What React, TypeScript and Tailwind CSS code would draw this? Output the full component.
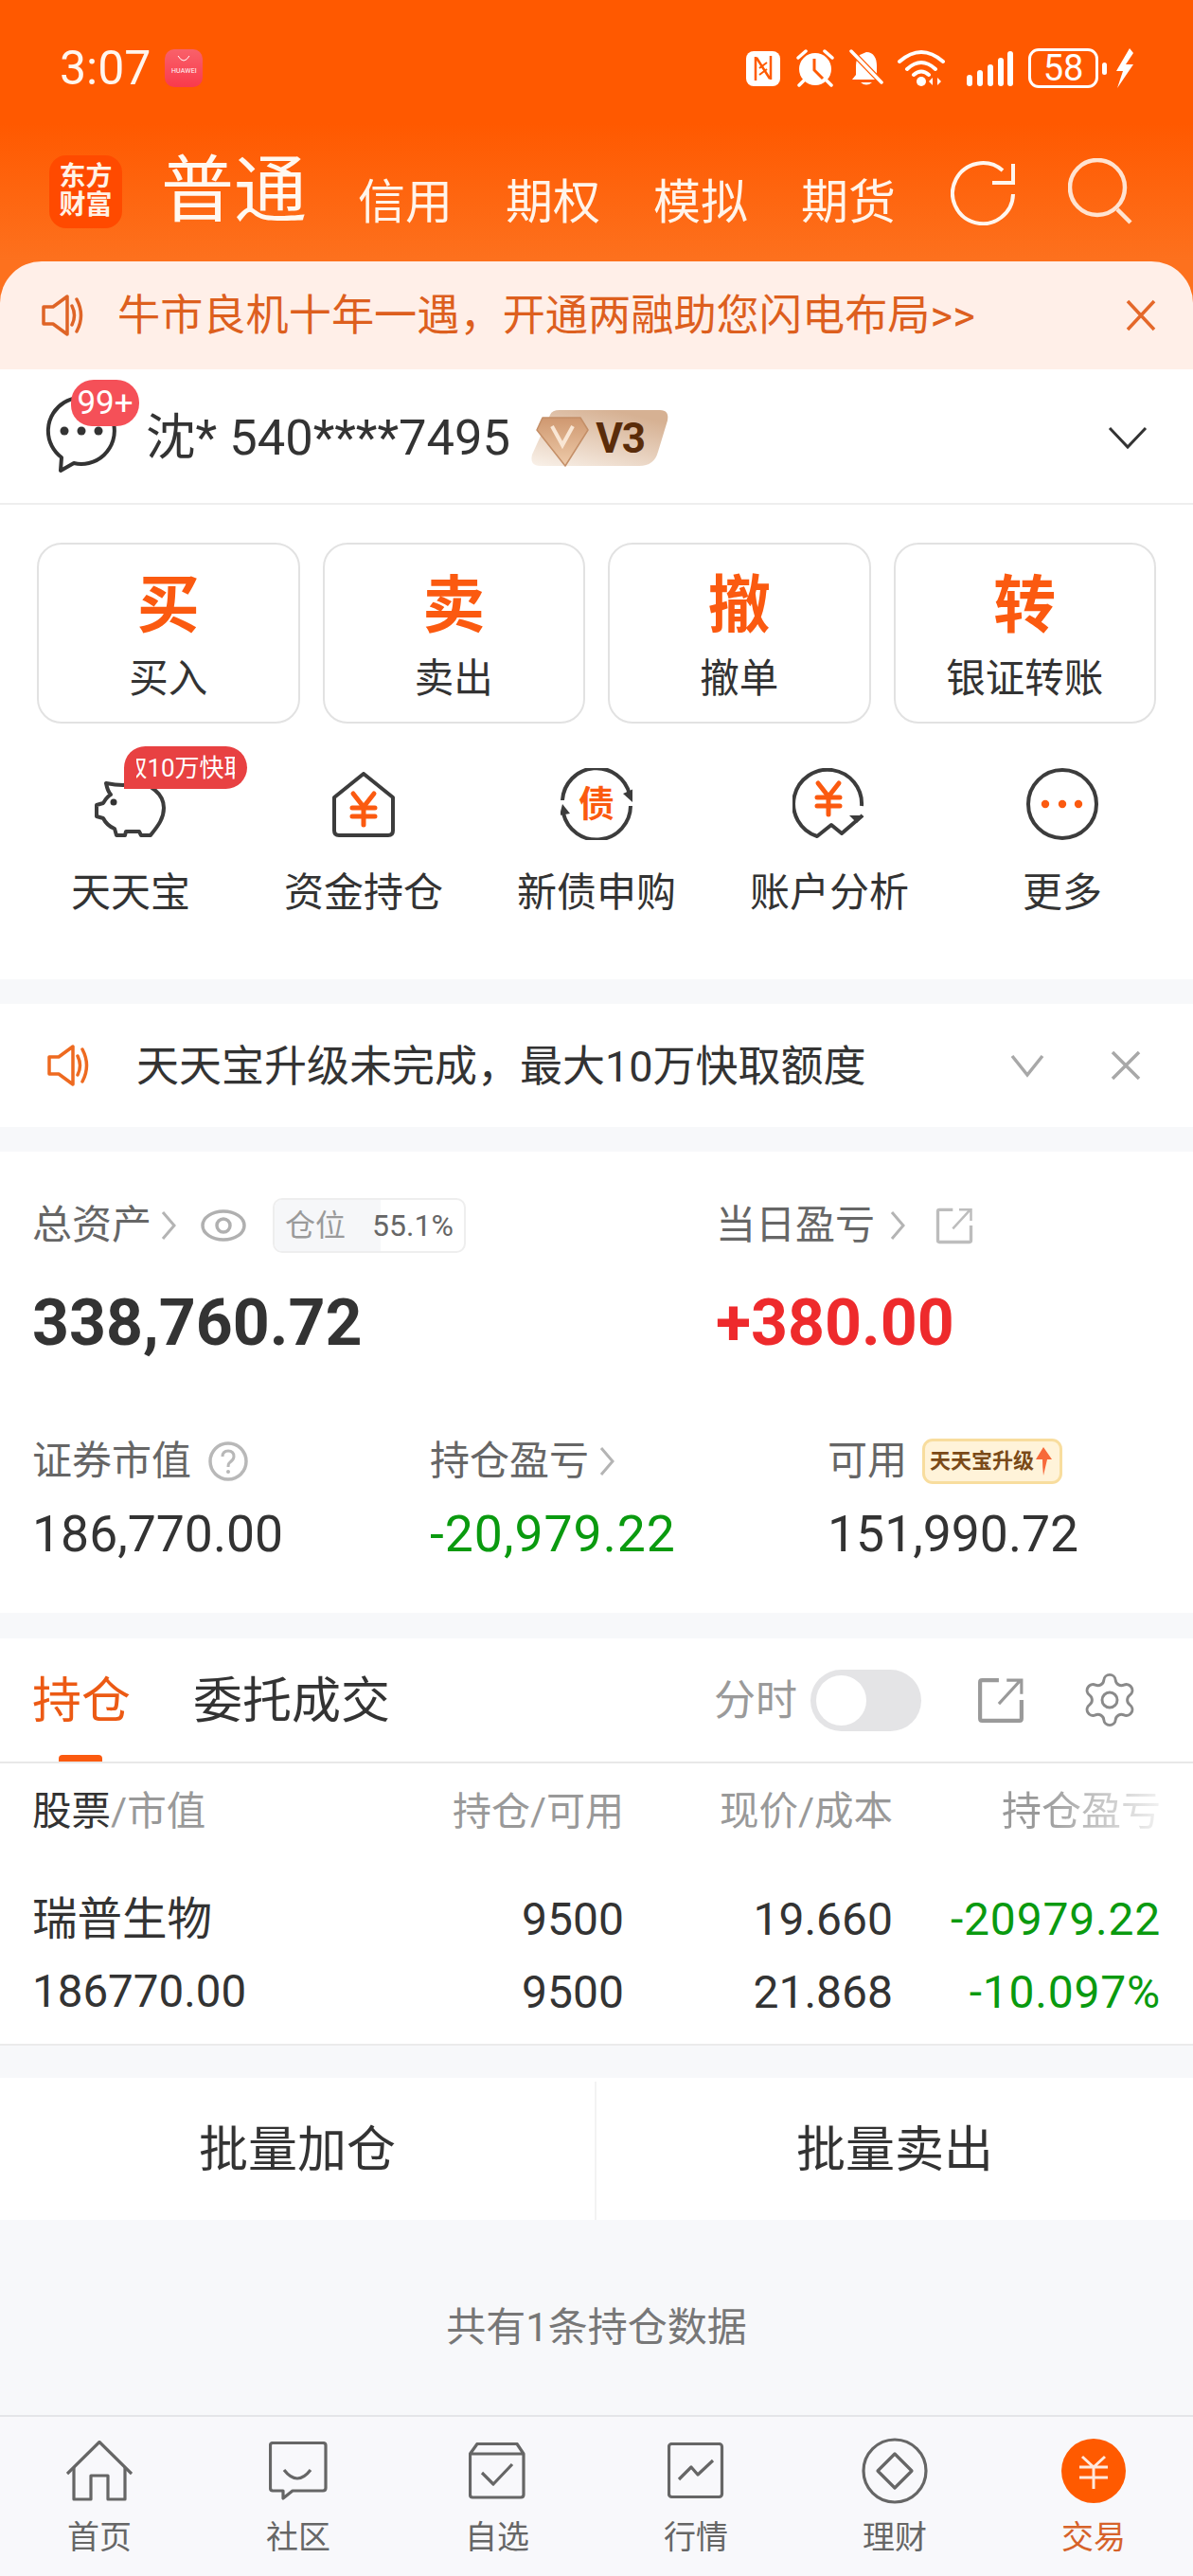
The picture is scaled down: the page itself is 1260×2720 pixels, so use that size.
import React from "react";
import { Settings } from "lucide-react";

const FONT = "font-['Roboto','Noto_Sans_CJK_SC',sans-serif]";

function Huawei() {
  return (
    <div className="ml-[15px] flex h-[40px] w-[40px] flex-col items-center rounded-[10px] bg-[linear-gradient(180deg,#f9616a,#f93a4c)]">
      <svg width="16" height="10" viewBox="0 0 16 10" className="mt-[6px]">
        <path d="M2 1 Q8 11 14 1" fill="none" stroke="#fff" strokeWidth="1" />
      </svg>
      <span className="mt-[3px] text-[7px] leading-[9px] tracking-[0.2px] text-white">HUAWEI</span>
    </div>
  );
}

function StatusIcons() {
  return (
    <div className="absolute left-[788px] top-[51px] flex items-center">
      <svg width="36" height="38" viewBox="0 0 36 38">
        <rect x="0" y="1" width="36" height="37" rx="8" fill="#fff" />
        <path d="M10 7 L10 32 M26 6 L26 31 M11 8 L25 30" stroke="#ff5a00" strokeWidth="2.5" fill="none" />
        <path d="M14 19 L22 13 M14 26 L22 20" stroke="#ff5a00" strokeWidth="2" fill="none" />
      </svg>
      <svg width="42" height="40" viewBox="0 0 42 40" className="ml-[16px]">
        <circle cx="21" cy="21" r="17" fill="#fff" />
        <path d="M3 9 L11 2 M39 9 L31 2 M9 33 L4 38 M33 33 L38 38" stroke="#fff" strokeWidth="3.5" strokeLinecap="round" />
        <path d="M20 10 V22 L29 31" stroke="#ff5a00" strokeWidth="3" fill="none" />
      </svg>
      <svg width="36" height="40" viewBox="0 0 36 40" className="ml-[15px]">
        <path d="M18 3 C26 3 29 10 29 17 V26 L34 32 H3 L7 27 V17 C7 12 9 8 11 6 Z" fill="#fff" />
        <path d="M12 35 Q18 40 24 35 Z" fill="#fff" />
        <path d="M2 2 L34 35" stroke="#ff5a00" strokeWidth="6" />
        <path d="M2 2 L34 35" stroke="#fff" strokeWidth="3.5" strokeLinecap="round" />
      </svg>
      <svg width="50" height="40" viewBox="0 0 50 40" className="ml-[15px]">
        <path d="M2 13 Q25 -7 48 13 M10 21 Q25 7 40 21 M17 27 Q25 20 33 27" fill="none" stroke="#fff" strokeWidth="4" strokeLinecap="round" />
        <circle cx="25" cy="34" r="5" fill="#fff" />
        <path d="M37 30 V38 L33 34 Z M42 30 V38 L46 34 Z" fill="#fff" />
      </svg>
      <svg width="49" height="40" viewBox="0 0 49 40" className="ml-[23px]">
        <rect x="0" y="27" width="6" height="12" rx="3" fill="#fff" />
        <rect x="11" y="22" width="6" height="17" rx="3" fill="#fff" />
        <rect x="22" y="16" width="6" height="23" rx="3" fill="#fff" />
        <rect x="33" y="9" width="6" height="30" rx="3" fill="#fff" />
        <rect x="43" y="2" width="6" height="37" rx="3" fill="#fff" />
      </svg>
      <div className="ml-[16px] flex h-[42px] w-[74px] items-center justify-center rounded-[11px] border-[3px] border-white text-[38px] font-normal leading-[36px] text-white">
        58
      </div>
      <div className="ml-[4px] h-[13px] w-[5px] rounded-full bg-white" />
      <svg width="20" height="42" viewBox="0 0 20 42" className="ml-[9px]">
        <path d="M15 0 L1 24 H8 L2 42 L19 17 H11 L19 5 Z" fill="#fff" />
      </svg>
    </div>
  );
}

function TopTab({ children }: { children: React.ReactNode }) {
  return <span className="text-[50px] leading-[56px] text-[#fff4ea]">{children}</span>;
}

function Speaker({ color, className }: { color: string; className?: string }) {
  return (
    <svg width="46" height="46" viewBox="0 0 46 46" className={className}>
      <path d="M2 14 H12 L27 3 V43 L12 32 H2 Z" fill="none" stroke={color} strokeWidth="3.5" strokeLinejoin="round" />
      <path d="M32 13 Q37 23 32 33 M37 6 Q46 23 37 40" fill="none" stroke={color} strokeWidth="3.5" strokeLinecap="round" />
    </svg>
  );
}

function Header() {
  return (
    <div className="relative h-[390px] bg-[linear-gradient(180deg,#ff5900_0,#ff5900_130px,#fd711e_276px)]">
      <div className="flex h-[144px] items-center pl-[63px]">
        <span className="text-[50px] font-normal leading-[50px] text-[#fff6ee]">3:07</span>
        <Huawei />
      </div>
      <StatusIcons />
      <div className="flex h-[116px] items-center pl-[52px]">
        <div className="flex h-[77px] w-[77px] flex-col items-center justify-center rounded-[18px] bg-[#ff4a00] text-[28px] font-bold leading-[30px] text-[#fff2e6]">
          <span>东方</span>
          <span>财富</span>
        </div>
        <span className="ml-[41px] text-[77px] leading-[80px] text-[#fff8f0]">普通</span>
        <div className="ml-[54px] mt-[24px] flex gap-[56px]">
          <TopTab>信用</TopTab>
          <TopTab>期权</TopTab>
          <TopTab>模拟</TopTab>
          <TopTab>期货</TopTab>
        </div>
        <svg width="68" height="68" viewBox="0 0 68 68" className="ml-[58px] mt-[4px]">
          <path d="M66 35 A32 32 0 1 1 55 10" fill="none" stroke="#fff6ee" strokeWidth="4" />
          <path d="M66 3 V23 H44" fill="none" stroke="#fff6ee" strokeWidth="4" />
        </svg>
        <svg width="68" height="70" viewBox="0 0 68 70" className="ml-[56px]">
          <circle cx="31" cy="31" r="29" fill="none" stroke="#ffe3d0" strokeWidth="4.5" />
          <path d="M52 54 L66 68" stroke="#ffe3d0" strokeWidth="4.5" />
        </svg>
      </div>
      <div className="mt-[16px] flex h-[114px] items-center rounded-t-[44px] bg-[#ffefe8] pl-[44px]">
        <Speaker color="#df6426" />
        <span className="ml-[34px] mt-[2px] whitespace-nowrap text-[45.2px] leading-[56px] text-[#dd5f1e]">
          牛市良机十年一遇，开通两融助您闪电布局&gt;&gt;
        </span>
        <svg width="32" height="34" viewBox="0 0 32 34" className="ml-auto mr-[39px]">
          <path d="M2 2 L30 32 M30 2 L2 32" stroke="#e4682a" strokeWidth="3.5" />
        </svg>
      </div>
    </div>
  );
}

function UserRow() {
  return (
    <div className="relative flex h-[143px] items-center border-b-2 border-[#eeeeee] bg-white pl-[48px]">
      <svg width="76" height="82" viewBox="0 0 76 82" className="-mt-[6px]">
        <path d="M30 72 A35 35 0 1 0 17 66 L16 80 Z" fill="none" stroke="#333" strokeWidth="4" strokeLinejoin="round" />
        <circle cx="20" cy="38" r="4.5" fill="#333" />
        <circle cx="38" cy="38" r="4.5" fill="#333" />
        <circle cx="56" cy="38" r="4.5" fill="#333" />
      </svg>
      <div className="absolute left-[75px] top-[11px] flex h-[49px] w-[72px] items-center justify-center rounded-[24px] rounded-bl-[22px] bg-[#f55058] text-[35px] leading-[40px] text-white">
        99+
      </div>
      <span className="ml-[30px] mt-[2px] whitespace-nowrap text-[52.5px] leading-[60px] text-[#333]">沈* 540****7495</span>
      <div className="relative ml-[20px] mt-[4px] h-[61px] w-[148px]">
        <svg width="148" height="61" viewBox="0 0 148 61">
          <defs>
            <linearGradient id="tagFill" x1="0" y1="1" x2="0.6" y2="0">
              <stop offset="0" stopColor="#f9f1e9" />
              <stop offset="1" stopColor="#d6b193" />
            </linearGradient>
            <linearGradient id="gemFill" x1="0" y1="0" x2="0" y2="1">
              <stop offset="0" stopColor="#cf9870" />
              <stop offset="1" stopColor="#eecbaa" />
            </linearGradient>
          </defs>
          <path d="M22 6 Q24 1 32 1 H138 Q148 1 146 12 L136 45 Q132 60 116 60 H12 Q0 60 3 48 Z" fill="url(#tagFill)" />
          <path d="M14 9 L54 9 L62 22 L38 60 L8 22 Z" fill="url(#gemFill)" stroke="#c48f68" strokeWidth="1.5" strokeLinejoin="round" />
          <path d="M24 18 L35 38 L46 18" fill="none" stroke="#f9e6d4" strokeWidth="4" />
        </svg>
        <span className="absolute left-[70px] top-[6px] text-[44px] font-bold leading-[50px] tracking-[-1px] text-[#5a2c0a]">V3</span>
      </div>
      <svg width="42" height="26" viewBox="0 0 42 26" className="ml-auto mr-[48px] mt-[2px]">
        <path d="M2 3 L21 23 L40 3" fill="none" stroke="#333" strokeWidth="3" />
      </svg>
    </div>
  );
}

function ActionCard({ big, label }: { big: string; label: string }) {
  return (
    <div className="flex h-[191px] flex-col items-center rounded-[26px] border-2 border-[#e2e2e2]">
      <span className="mt-[29px] text-[66px] font-bold leading-[72px] text-[#fb5a10]">{big}</span>
      <span className="mt-[18px] whitespace-nowrap text-[41.5px] leading-[46px] text-[#333]">{label}</span>
    </div>
  );
}

const orangeYuan = (cx: number, top: number) => (
  <path
    d={`M${cx - 11} ${top} L${cx} ${top + 14} L${cx + 11} ${top} M${cx} ${top + 14} V${top + 33} M${cx - 12} ${top + 15} H${cx + 12} M${cx - 12} ${top + 24} H${cx + 12}`}
    fill="none"
    stroke="#fb5a10"
    strokeWidth="5"
    strokeLinecap="round"
  />
);

function PigIcon() {
  return (
    <svg width="76" height="62" viewBox="0 0 76 62" className="mt-[12px]">
      <path
        d="M30 6 C24 6 22 6 12 4 C13 9 14 13 17 16 C13 18 11 22 9 25 L2 27 L2 39 L9 41 C12 47 16 50 21 52 L23 59 L32 59 L33 55 L47 55 L49 59 L59 59 C66 50 73 42 73 30 C73 15 58 4 44 4 Z"
        fill="none"
        stroke="#3c3c3c"
        strokeWidth="4"
        strokeLinejoin="round"
      />
      <circle cx="20" cy="24" r="3.5" fill="#333" />
    </svg>
  );
}

function HouseIcon() {
  return (
    <svg width="66" height="70" viewBox="0 0 66 70" className="mt-[4px]">
      <path d="M33 2 L64 27 V62 Q64 67 59 67 H7 Q2 67 2 62 V27 Z" fill="none" stroke="#3c3c3c" strokeWidth="4" strokeLinejoin="round" />
      {orangeYuan(33, 23)}
    </svg>
  );
}

function BondIcon() {
  return (
    <div className="relative h-[76px] w-[76px]">
      <svg width="76" height="76" viewBox="0 0 76 76">
        <path d="M2 34 A36 36 0 0 1 73 28" fill="none" stroke="#3c3c3c" strokeWidth="4" />
        <path d="M66 27 L76 36 L77 22 Z" fill="#3c3c3c" />
        <path d="M74 40 A36 36 0 0 1 3 48" fill="none" stroke="#3c3c3c" strokeWidth="4" />
        <path d="M-1 50 L10 48 L2 38 Z" fill="#3c3c3c" />
      </svg>
      <span className="absolute left-0 top-[16px] w-full text-center text-[38px] font-bold leading-[44px] text-[#fb5a10]">债</span>
    </div>
  );
}

function AnalysisIcon() {
  return (
    <svg width="78" height="76" viewBox="0 0 78 76">
      <path d="M73 40 A36 36 0 1 0 26 72 L41 60 L52 69 L74 50" fill="none" stroke="#3c3c3c" strokeWidth="4" strokeLinejoin="round" />
      <path d="M60 50 H75 L68 58 Z" fill="#3c3c3c" />
      {orangeYuan(38, 16)}
    </svg>
  );
}

function MoreIcon() {
  return (
    <svg width="76" height="76" viewBox="0 0 76 76">
      <circle cx="38" cy="38" r="36" fill="none" stroke="#3c3c3c" strokeWidth="4" />
      <circle cx="20" cy="38" r="4.2" fill="#fb5a10" />
      <circle cx="38" cy="38" r="4.2" fill="#fb5a10" />
      <circle cx="55" cy="38" r="4.2" fill="#fb5a10" />
    </svg>
  );
}

function Shortcut({ icon, label, children }: { icon: React.ReactNode; label: string; children?: React.ReactNode }) {
  return (
    <div className="relative flex flex-col items-center">
      <div className="flex h-[76px] items-start justify-center">{icon}</div>
      <span className="mt-[31px] whitespace-nowrap text-[42px] leading-[50px] text-[#333]">{label}</span>
      {children}
    </div>
  );
}

function Actions() {
  return (
    <div className="h-[501px] bg-white pt-[40px]">
      <div className="grid grid-cols-4 gap-[24px] px-[39px]">
        <ActionCard big="买" label="买入" />
        <ActionCard big="卖" label="卖出" />
        <ActionCard big="撤" label="撤单" />
        <ActionCard big="转" label="银证转账" />
      </div>
      <div className="mt-[47px] grid grid-cols-5 px-[15px]">
        <Shortcut icon={<PigIcon />} label="天天宝">
          <div className="absolute left-[116px] top-[-23px] flex h-[45px] w-[130px] items-center justify-center rounded-[23px] rounded-bl-none bg-[#e84142]">
            <div className="flex w-[104px] justify-center overflow-hidden">
              <span className="whitespace-nowrap text-[26px] leading-[36px] text-white">取10万快取</span>
            </div>
          </div>
        </Shortcut>
        <Shortcut icon={<HouseIcon />} label="资金持仓" />
        <Shortcut icon={<BondIcon />} label="新债申购" />
        <Shortcut icon={<AnalysisIcon />} label="账户分析" />
        <Shortcut icon={<MoreIcon />} label="更多" />
      </div>
    </div>
  );
}

function Notice() {
  return (
    <div className="flex h-[130px] items-center bg-white pl-[50px]">
      <Speaker color="#ee6a20" />
      <span className="ml-[48px] mt-[3px] whitespace-nowrap text-[45px] leading-[56px] text-[#333]">天天宝升级未完成，最大10万快取额度</span>
      <svg width="36" height="26" viewBox="0 0 36 26" className="ml-auto">
        <path d="M2 3 L18 23 L34 3" fill="none" stroke="#a8a8a8" strokeWidth="3.5" />
      </svg>
      <svg width="32" height="32" viewBox="0 0 32 32" className="ml-[70px] mr-[55px]">
        <path d="M2 2 L30 30 M30 2 L2 30" stroke="#a8a8a8" strokeWidth="3.5" />
      </svg>
    </div>
  );
}

function Chevron() {
  return (
    <svg width="18" height="34" viewBox="0 0 18 34" className="shrink-0">
      <path d="M3 3 L15 17 L3 31" fill="none" stroke="#b4b4b4" strokeWidth="3" />
    </svg>
  );
}

function OpenIcon({ size, color }: { size: number; color: string }) {
  return (
    <svg width={size} height={size} viewBox="0 0 48 48">
      <path d="M22 4 H5 Q3 4 3 6 V43 Q3 45 5 45 H43 Q45 45 45 43 V24" fill="none" stroke={color} strokeWidth="4" />
      <path d="M22 28 L44 4 M30 4 H45 V18" fill="none" stroke={color} strokeWidth="3" />
    </svg>
  );
}

function Assets() {
  return (
    <div className="h-[487px] bg-white px-[34px] pt-[49px]">
      <div className="grid h-[58px] grid-cols-[722px_1fr] items-center">
        <div className="flex items-center">
          <span className="text-[42px] leading-[50px] text-[#666]">总资产</span>
          <span className="ml-[9px]"><Chevron /></span>
          <svg width="48" height="36" viewBox="0 0 48 36" className="ml-[25px]">
            <ellipse cx="24" cy="18" rx="22" ry="15" fill="none" stroke="#b0b0b0" strokeWidth="3.5" />
            <circle cx="24" cy="18" r="7" fill="none" stroke="#b0b0b0" strokeWidth="3.5" />
          </svg>
          <div className="ml-[28px] flex h-[58px] w-[204px] overflow-hidden rounded-[10px] border-2 border-[#eeeeee]">
            <div className="flex w-[112px] items-center bg-[#f6f7f9] pl-[11px] text-[32px] leading-[40px] text-[#9a9a9a]">仓位</div>
            <div className="flex flex-1 items-center text-[32px] leading-[40px] text-[#666]">
              <span className="-ml-[9px]">55.1%</span>
            </div>
          </div>
        </div>
        <div className="flex items-center">
          <span className="text-[42px] leading-[50px] text-[#666]">当日盈亏</span>
          <span className="ml-[15px]"><Chevron /></span>
          <span className="ml-[31px]"><OpenIcon size={40} color="#bdbdbd" /></span>
        </div>
      </div>
      <div className="mt-[39px] grid h-[70px] grid-cols-[722px_1fr] items-center text-[68px] font-bold leading-[70px]">
        <span className="text-[#333]">338,760.72</span>
        <span className="text-[#ee2a2c]">+380.00</span>
      </div>
      <div className="mt-[86px] grid h-[50px] grid-cols-[420px_420px_1fr] items-center">
        <div className="flex items-center">
          <span className="text-[42px] leading-[50px] text-[#666]">证券市值</span>
          <svg width="42" height="42" viewBox="0 0 42 42" className="ml-[18px]">
            <circle cx="21" cy="21" r="19" fill="none" stroke="#b8b8b8" strokeWidth="3.5" />
            <path d="M15 16 Q15 10 21 10 Q27 10 27 16 Q27 19 23 22 Q21 23 21 27" fill="none" stroke="#b8b8b8" strokeWidth="3" />
            <circle cx="21" cy="32" r="2" fill="#b8b8b8" />
          </svg>
        </div>
        <div className="flex items-center">
          <span className="text-[42px] leading-[50px] text-[#666]">持仓盈亏</span>
          <span className="ml-[10px]"><Chevron /></span>
        </div>
        <div className="flex items-center">
          <span className="text-[42px] leading-[50px] text-[#666]">可用</span>
          <div className="ml-[16px] flex h-[48px] w-[148px] items-center rounded-[11px] border-[3px] border-[#f8dd9e] bg-[#fff3d9] pl-[5px]">
            <span className="whitespace-nowrap text-[22px] font-bold leading-[28px] text-[#7a4a18]">天天宝升级</span>
            <svg width="20" height="32" viewBox="0 0 20 32" className="shrink-0">
              <path d="M10 1 L19 14 H14 L10 31 Q9 22 9 14 H2 Z" fill="#f7693a" />
            </svg>
          </div>
        </div>
      </div>
      <div className="mt-[22px] grid h-[60px] grid-cols-[420px_420px_1fr] items-center text-[53.5px] leading-[60px]">
        <span className="text-[#333]">186,770.00</span>
        <span className="tracking-[1px] text-[#0a9a0f]">-20,979.22</span>
        <span className="text-[#333]">151,990.72</span>
      </div>
    </div>
  );
}

function Positions() {
  return (
    <div className="bg-white">
      <div className="flex h-[132px] items-center border-b-2 border-[#e8e8e8] pl-[34px]">
        <div className="relative flex h-full items-center">
          <span className="mt-[4px] text-[52px] leading-[60px] text-[#ec5a14]">持仓</span>
          <div className="absolute bottom-0 left-[28px] h-[7px] w-[46px] rounded-t-[4px] bg-[#fb5a10]" />
        </div>
        <span className="ml-[66px] mt-[4px] text-[52px] leading-[60px] text-[#333]">委托成交</span>
        <span className="ml-[342px] mt-[2px] text-[44px] leading-[56px] text-[#9a9a9a]">分时</span>
        <div className="ml-[14px] flex h-[65px] w-[117px] items-center rounded-full bg-[#e4e4e6] pl-[6px]">
          <div className="h-[53px] w-[53px] rounded-full bg-white" />
        </div>
        <span className="ml-[59px]"><OpenIcon size={50} color="#9a9a9a" /></span>
        <Settings size={64} strokeWidth={1.1} color="#8a8a8a" className="ml-[58px]" />
      </div>
      <div className="grid grid-cols-[301px_324px_284px_283px] px-[34px] pt-[26px] text-right">
        <span className="text-left text-[41.5px] leading-[50px] text-[#999]">
          <span className="text-[#333]">股票</span>/市值
        </span>
        <span className="text-[41px] leading-[50px] text-[#999]">持仓/可用</span>
        <span className="text-[41.5px] leading-[50px] text-[#999]">现价/成本</span>
        <span className="bg-[linear-gradient(90deg,#999_55%,#f2f2f2_100%)] bg-clip-text text-[42px] leading-[50px] text-transparent">持仓盈亏</span>
      </div>
      <div className="mt-[59px] grid h-[55px] grid-cols-[301px_324px_284px_283px] items-center px-[34px] text-right text-[48px] leading-[55px] text-[#333]">
        <span className="mt-[3px] text-left text-[47.5px]">瑞普生物</span>
        <span>9500</span>
        <span>19.660</span>
        <span className="tracking-[0.8px] text-[#0a9a0f]">-20979.22</span>
      </div>
      <div className="mt-[24px] grid h-[55px] grid-cols-[301px_324px_284px_283px] items-center px-[34px] text-right text-[48px] leading-[55px] text-[#333]">
        <span className="text-left text-[47.5px]">186770.00</span>
        <span>9500</span>
        <span>21.868</span>
        <span className="tracking-[0.8px] text-[#0a9a0f]">-10.097%</span>
      </div>
      <div className="mt-[27px] h-[2px] bg-[#ebebeb]" />
    </div>
  );
}

function BulkButtons() {
  return (
    <div className="grid h-[150px] grid-cols-2 bg-white pt-[4px] text-[52px] leading-[60px] text-[#333]">
      <div className="flex items-center justify-center border-r-2 border-[#f3f3f3]">批量加仓</div>
      <div className="flex items-center justify-center">批量卖出</div>
    </div>
  );
}

const navStroke = { fill: "none", stroke: "#666", strokeWidth: 3.2, strokeLinejoin: "round" as const };

function NavItem({ icon, label, active }: { icon: React.ReactNode; label: string; active?: boolean }) {
  return (
    <div className="flex flex-col items-center">
      <div className="flex h-[72px] items-center justify-center">{icon}</div>
      <span className={`mt-[14px] text-[34px] leading-[40px] ${active ? "text-[#d6622a]" : "text-[#666]"}`}>{label}</span>
    </div>
  );
}

function BottomNav() {
  return (
    <div className="grid h-[170px] grid-cols-6 border-t-2 border-[#e4e5e8] bg-[#f8f8fb] pt-[21px]">
      <NavItem
        label="首页"
        icon={
          <svg width="70" height="64" viewBox="0 0 70 64">
            <path d="M1 35 L35 1.5 L69 35" {...navStroke} />
            <path d="M8 28 V62 H26 V37 H44 V62 H62 V28" {...navStroke} />
          </svg>
        }
      />
      <NavItem
        label="社区"
        icon={
          <svg width="62" height="62" viewBox="0 0 62 62">
            <path d="M4 1.5 H57 Q60 1.5 60 4 V49 Q60 52 57 52 H25 L15 60 V52 H4 Q1.5 52 1.5 49 V4 Q1.5 1.5 4 1.5 Z" {...navStroke} />
            <path d="M16 30 Q30 48 44 30" {...navStroke} />
          </svg>
        }
      />
      <NavItem
        label="自选"
        icon={
          <svg width="60" height="60" viewBox="0 0 60 60">
            <path d="M1.5 12 L9 1.5 H51 L58 12 V55 Q58 58 55 58 H4 Q1.5 58 1.5 55 Z M1.5 12 H58" {...navStroke} />
            <path d="M14 32 L26 44 L46 23" {...navStroke} />
          </svg>
        }
      />
      <NavItem
        label="行情"
        icon={
          <svg width="60" height="60" viewBox="0 0 60 60">
            <rect x="1.5" y="1.5" width="56" height="56" rx="3" {...navStroke} />
            <path d="M12 39 L25 26 L32 34 L48 19" {...navStroke} />
          </svg>
        }
      />
      <NavItem
        label="理财"
        icon={
          <svg width="70" height="70" viewBox="0 0 70 70">
            <circle cx="35" cy="35" r="33" {...navStroke} />
            <path d="M35 17 L53 35 L35 53 L17 35 Z" {...navStroke} />
          </svg>
        }
      />
      <NavItem
        active
        label="交易"
        icon={
          <svg width="70" height="70" viewBox="0 0 70 70">
            <circle cx="35" cy="35" r="34" fill="#ff5a00" />
            <path d="M23 20 L35 31 L47 20 M35 31 V54 M20 31 H50 M20 42 H50" fill="none" stroke="#ffe9dd" strokeWidth="3" />
          </svg>
        }
      />
    </div>
  );
}

export default function App() {
  return (
    <div className={`flex h-[2720px] w-[1260px] flex-col overflow-hidden bg-[#f7f8fa] ${FONT}`}>
      <Header />
      <UserRow />
      <Actions />
      <div className="h-[26px] shrink-0" />
      <Notice />
      <div className="h-[26px] shrink-0" />
      <Assets />
      <div className="h-[27px] shrink-0" />
      <Positions />
      <div className="h-[34px] shrink-0" />
      <BulkButtons />
      <div className="flex h-[206px] items-center justify-center pt-[22px] text-[42px] leading-[50px] text-[#777]">共有1条持仓数据</div>
      <BottomNav />
    </div>
  );
}
